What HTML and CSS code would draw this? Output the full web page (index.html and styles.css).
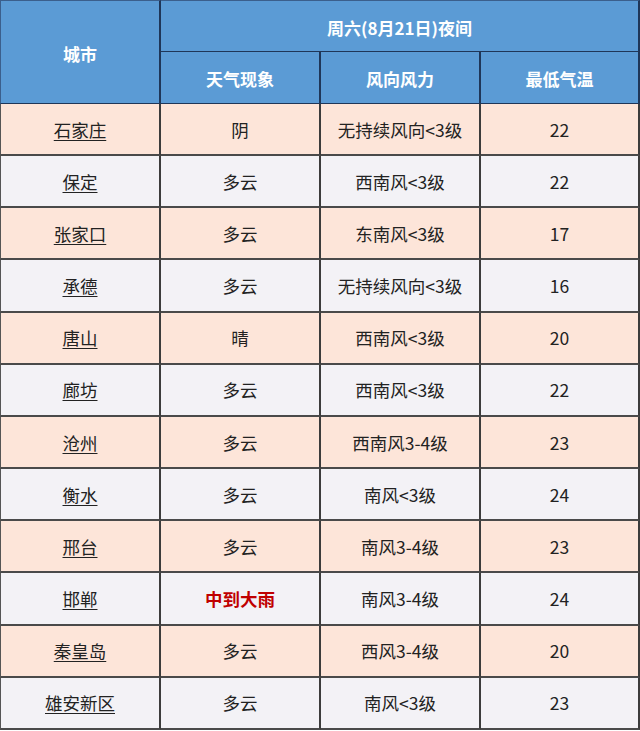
FILE: index.html
```html
<!DOCTYPE html>
<html lang="zh-CN">
<head>
<meta charset="utf-8">
<title>天气预报</title>
<link rel="stylesheet" href="styles.css">
</head>
<body>
<div class="table">
  <div class="cell head city-head">城市</div>
  <div class="cell head span3">周六(8月21日)夜间</div>
  <div class="cell head sub">天气现象</div>
  <div class="cell head sub">风向风力</div>
  <div class="cell head sub last">最低气温</div>

  <div class="cell peach first"><u>石家庄</u></div><div class="cell peach">阴</div><div class="cell peach">无持续风向&lt;3级</div><div class="cell peach last">22</div>
  <div class="cell gray first"><u>保定</u></div><div class="cell gray">多云</div><div class="cell gray">西南风&lt;3级</div><div class="cell gray last">22</div>
  <div class="cell peach first"><u>张家口</u></div><div class="cell peach">多云</div><div class="cell peach">东南风&lt;3级</div><div class="cell peach last">17</div>
  <div class="cell gray first"><u>承德</u></div><div class="cell gray">多云</div><div class="cell gray">无持续风向&lt;3级</div><div class="cell gray last">16</div>
  <div class="cell peach first"><u>唐山</u></div><div class="cell peach">晴</div><div class="cell peach">西南风&lt;3级</div><div class="cell peach last">20</div>
  <div class="cell gray first"><u>廊坊</u></div><div class="cell gray">多云</div><div class="cell gray">西南风&lt;3级</div><div class="cell gray last">22</div>
  <div class="cell peach first"><u>沧州</u></div><div class="cell peach">多云</div><div class="cell peach">西南风3-4级</div><div class="cell peach last">23</div>
  <div class="cell gray first"><u>衡水</u></div><div class="cell gray">多云</div><div class="cell gray">南风&lt;3级</div><div class="cell gray last">24</div>
  <div class="cell peach first"><u>邢台</u></div><div class="cell peach">多云</div><div class="cell peach">南风3-4级</div><div class="cell peach last">23</div>
  <div class="cell gray first"><u>邯郸</u></div><div class="cell gray rain">中到大雨</div><div class="cell gray">南风3-4级</div><div class="cell gray last">24</div>
  <div class="cell peach first"><u>秦皇岛</u></div><div class="cell peach">多云</div><div class="cell peach">西风3-4级</div><div class="cell peach last">20</div>
  <div class="cell gray first"><u>雄安新区</u></div><div class="cell gray">多云</div><div class="cell gray">南风&lt;3级</div><div class="cell gray last">23</div>
</div>
</body>
</html>
```

FILE: styles.css
```css
* { box-sizing: border-box; }
html, body { margin: 0; padding: 0; background: #ffffff; }
body {
  font-family: "Noto Sans CJK SC", "Noto Sans", sans-serif;
  width: 640px;
  height: 731px;
  overflow: hidden;
}
.table {
  display: grid;
  grid-template-columns: 161px 160px 160px 159px;
  grid-template-rows: 52px 52px;
  grid-auto-rows: 52.17px;
  width: 640px;
}
.cell {
  display: flex;
  align-items: center;
  justify-content: center;
  font-size: 17.5px;
  color: #222222;
  border-right: 2px solid #3c3c3c;
  border-bottom: 2px solid #4a4a4a;
  white-space: nowrap;
}
.head {
  background: #5b9bd5;
  color: #ffffff;
  font-weight: bold;
  font-size: 17px;
  border-right: 2px solid #1f3658;
  border-bottom: 1px solid #1f3658;
  padding-top: 2px;
}
.city-head {
  grid-row: span 2;
  border-left: 1px solid #3b5f8c;
  border-top: 1px solid #3b5f8c;
}
.span3 {
  grid-column: span 3;
  border-top: 1px solid #3b5f8c;
}
.first { border-left: 1px solid #555555; }
.peach { background: #fde5d9; }
.gray { background: #f3f2f6; }
u { text-decoration: underline; text-underline-offset: 3px; text-decoration-thickness: 1px; }
.rain { color: #c00000; font-weight: bold; }
```
